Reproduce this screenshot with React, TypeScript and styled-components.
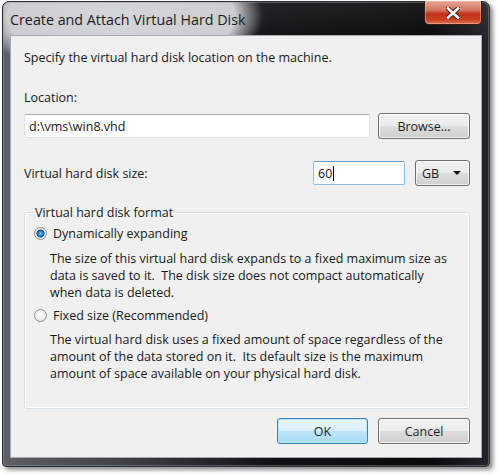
import React from 'react';
import styled, { createGlobalStyle } from 'styled-components';

const GlobalStyle = createGlobalStyle`
  html, body {
    margin: 0;
    padding: 0;
    background: #ffffff;
  }
  body {
    font-family: "Open Sans", "Noto Sans", "DejaVu Sans", sans-serif;
    color: #181818;
  }
`

const Page = styled.div`
  width: 500px;
  height: 475px;
  overflow: hidden;
  padding: 1px 0 0 2px;
  box-sizing: border-box;
`

const Window = styled.div`
  width: 488px;
  height: 466px;
  box-sizing: border-box;
  border: 1px solid #2c2f33;
  border-radius: 7px 7px 4px 4px;
  padding: 0 7px 8px 7px;
  display: flex;
  flex-direction: column;
  box-shadow: 3px 3px 4px rgba(0, 0, 0, 0.45), inset 0 0 0 1px rgba(150, 155, 160, 0.45);
  background:
    radial-gradient(ellipse 142px 64px at 118px 14px, rgba(212, 214, 217, 1) 0%, rgba(204, 206, 209, 1) 80%, rgba(0, 0, 0, 0) 100%),
    linear-gradient(180deg, rgba(255, 255, 255, 0.08) 0%, rgba(0, 0, 0, 0) 40px),
    linear-gradient(90deg, #5d6167 0%, #3e4146 25%, #111213 55%, #0a0a0b 88%, #232528 100%);
`

const TitleBar = styled.div`
  height: 33px;
  display: flex;
  justify-content: space-between;
  align-items: flex-start;
`

const Title = styled.div`
  font-family: "Open Sans", "Noto Sans", sans-serif;
  font-size: 14.3px;
  color: #1c1c1c;
  padding-top: 8px;
`

const CloseButton = styled.div`
  width: 58px;
  height: 24px;
  margin-top: -1px;
  box-sizing: border-box;
  border: 1px solid #3c1a14;
  border-top: none;
  border-radius: 0 0 5px 5px;
  background: linear-gradient(180deg, #e6a595 0%, #d47560 40%, #c2321a 55%, #c8401f 80%, #df7455 100%);
  box-shadow: inset 0 0 0 1px rgba(255, 200, 185, 0.45);
  display: flex;
  align-items: center;
  justify-content: center;
`

const Client = styled.div`
  flex: 1;
  background: #f0f0f0;
  border: 1px solid #a9adb2;
  display: flex;
  flex-direction: column;
  padding: 13px 11px 0 13px;
  font-size: 12.5px;
  line-height: 17px;
`

const Text = styled.div<{ $top?: number }>`
  margin-top: ${p => p.$top ?? 0}px;
`

const Row = styled.div<{ $top: number }>`
  display: flex;
  align-items: center;
  margin-top: ${p => p.$top}px;
`

const TextBox = styled.div<{ $width?: number; $focused?: boolean }>`
  ${p => (p.$width ? `width: ${p.$width}px;` : 'flex: 1;')}
  height: 24px;
  box-sizing: border-box;
  background: #ffffff;
  border: 1px solid ${p => (p.$focused ? '#8fbde8' : '#dde1e6')};
  border-top-color: ${p => (p.$focused ? '#6f9fcf' : '#abadb3')};
  border-radius: 2px;
  padding: 0 4px;
  display: flex;
  align-items: center;
`

const Caret = styled.span`
  display: inline-block;
  width: 1px;
  height: 15px;
  background: #000;
  margin-left: 1px;
`

const Gap = styled.div<{ $size?: number }>`
  flex: ${p => (p.$size ? `0 0 ${p.$size}px` : '1')};
`

const Button = styled.div<{ $width: number; $default?: boolean }>`
  width: ${p => p.$width}px;
  height: 26px;
  box-sizing: border-box;
  border: 1px solid ${p => (p.$default ? '#3c7fb1' : '#707070')};
  border-radius: 3px;
  display: flex;
  align-items: center;
  justify-content: center;
  background: ${p =>
    p.$default
      ? 'linear-gradient(180deg, #eaf6fd 0%, #d9f0fc 48%, #bee6fd 52%, #a7d9f5 100%)'
      : 'linear-gradient(180deg, #f2f2f2 0%, #ebebeb 48%, #dddddd 52%, #cfcfcf 100%)'};
  box-shadow: inset 0 0 0 1px ${p => (p.$default ? 'rgba(180, 230, 255, 0.9)' : 'rgba(255, 255, 255, 0.7)')};
  color: #1e1e1e;
`

const Combo = styled(Button)`
  justify-content: space-between;
  padding: 0 8px 0 6px;
`

const Arrow = styled.span`
  width: 0;
  height: 0;
  border-left: 4px solid transparent;
  border-right: 4px solid transparent;
  border-top: 4px solid #111;
`

const Group = styled.fieldset`
  margin: 18px 0 0 0;
  height: 205px;
  box-sizing: border-box;
  border: 1px solid #d5dfe5;
  border-radius: 3px;
  box-shadow: inset 0 0 0 1px #ffffff;
  padding: 0 10px 0 9px;
  display: flex;
  flex-direction: column;
`

const Legend = styled.legend`
  padding: 0 1px;
  line-height: 17px;
`

const RadioRow = styled.div<{ $top: number }>`
  display: flex;
  align-items: center;
  gap: 6px;
  margin-top: ${p => p.$top}px;
`

const Radio = styled.span<{ $checked?: boolean }>`
  width: 13px;
  height: 13px;
  box-sizing: border-box;
  border-radius: 50%;
  border: 1px solid #8e8f8f;
  background: ${p =>
    p.$checked
      ? 'radial-gradient(circle at 50% 50%, #8ad0ff 0%, #2a7fd0 28%, #11508f 48%, #dfe8ef 56%, #f4f6f8 100%)'
      : 'radial-gradient(circle at 40% 40%, #ffffff 0%, #f0f0f0 50%, #cfd3d6 100%)'};
  flex-shrink: 0;
`

const Description = styled.div<{ $top: number }>`
  margin: ${p => p.$top}px 0 0 16px;
  line-height: 17px;
`

const ButtonBar = styled.div`
  display: flex;
  justify-content: flex-end;
  gap: 10px;
  margin-top: 9px;
`

const App = () => {
  return (
    <>
      <GlobalStyle />
      <Page>
        <Window>
          <TitleBar>
            <Title>Create and Attach Virtual Hard Disk</Title>
            <CloseButton>
              <svg width="14" height="12" viewBox="0 0 14 12">
                <path d="M2 1.5 L12 10.5 M12 1.5 L2 10.5" stroke="#3a1410" strokeWidth="4.6" strokeLinecap="square" />
                <path d="M2 1.5 L12 10.5 M12 1.5 L2 10.5" stroke="#ffffff" strokeWidth="2.8" strokeLinecap="square" />
              </svg>
            </CloseButton>
          </TitleBar>
          <Client>
            <Text>Specify the virtual hard disk location on the machine.</Text>
            <Text $top={23}>Location:</Text>
            <Row $top={7}>
              <TextBox>d:\vms\win8.vhd</TextBox>
              <Gap $size={8} />
              <Button $width={92}>Browse...</Button>
            </Row>
            <Row $top={21}>
              <span>Virtual hard disk size:</span>
              <Gap />
              <TextBox $width={92} $focused>
                60<Caret />
              </TextBox>
              <Gap $size={10} />
              <Combo $width={55}>
                GB<Arrow />
              </Combo>
            </Row>
            <Group>
              <Legend>Virtual hard disk format</Legend>
              <RadioRow $top={4}>
                <Radio $checked />
                <span>Dynamically expanding</span>
              </RadioRow>
              <Description $top={8}>
                The size of this virtual hard disk expands to a fixed maximum size as
                <br />
                data is saved to it.&nbsp; The disk size does not compact automatically
                <br />
                when data is deleted.
              </Description>
              <RadioRow $top={6}>
                <Radio />
                <span>Fixed size (Recommended)</span>
              </RadioRow>
              <Description $top={7}>
                The virtual hard disk uses a fixed amount of space regardless of the
                <br />
                amount of the data stored on it.&nbsp; Its default size is the maximum
                <br />
                amount of space available on your physical hard disk.
              </Description>
            </Group>
            <ButtonBar>
              <Button $width={91} $default>OK</Button>
              <Button $width={92}>Cancel</Button>
            </ButtonBar>
          </Client>
        </Window>
      </Page>
    </>
  );
}

export default App;
